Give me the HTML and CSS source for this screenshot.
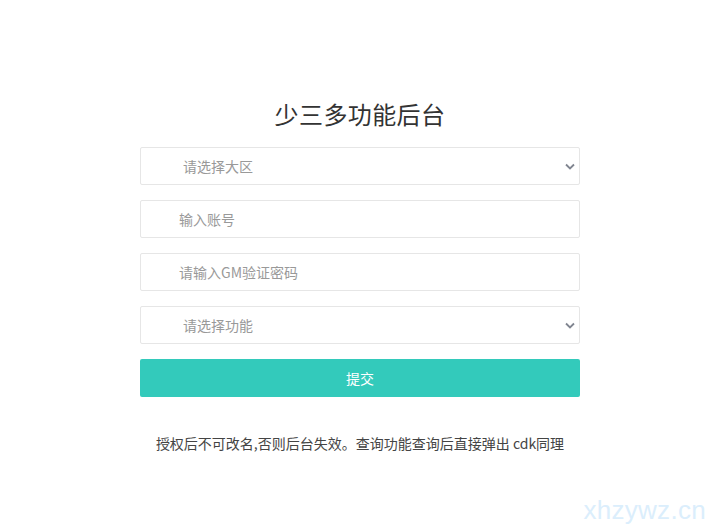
FILE: index.html
```html
<!DOCTYPE html>
<html lang="zh-CN">
<head>
<meta charset="utf-8">
<title>少三多功能后台</title>
<link rel="stylesheet" href="styles.css">
</head>
<body>
<main class="wrap">
  <h1 class="title">少三多功能后台</h1>
  <form class="form">
    <div class="select-box">
      <select class="field sel"><option>请选择大区</option></select>
      <svg class="chev" width="10" height="7" viewBox="0 0 10 7"><path d="M1 1.5 L5 5.5 L9 1.5" fill="none" stroke="#808590" stroke-width="1.8"/></svg>
    </div>
    <input class="field inp" type="text" placeholder="输入账号">
    <input class="field inp" type="text" placeholder="请输入GM验证密码">
    <div class="select-box">
      <select class="field sel"><option>请选择功能</option></select>
      <svg class="chev" width="10" height="7" viewBox="0 0 10 7"><path d="M1 1.5 L5 5.5 L9 1.5" fill="none" stroke="#808590" stroke-width="1.8"/></svg>
    </div>
    <button class="btn" type="button">提交</button>
  </form>
  <p class="note">授权后不可改名,否则后台失效。查询功能查询后直接弹出 cdk同理</p>
</main>
<div class="watermark">xhzywz.cn</div>
</body>
</html>
```

FILE: styles.css
```css
html, body {
  margin: 0;
  padding: 0;
  background: #fff;
}
body {
  font-family: "Noto Sans CJK SC", "Noto Sans", sans-serif;
  color: #333;
  width: 708px;
  height: 525px;
  overflow: hidden;
  position: relative;
}
.wrap {
  width: 440px;
  margin: 0 0 0 140px;
  padding-top: 97px;
}
.title {
  margin: 0 0 16px;
  font-size: 24px;
  line-height: 34px;
  font-weight: 400;
  text-align: center;
  color: #333;
  letter-spacing: 0.4px;
}
.form {
  display: flex;
  flex-direction: column;
  gap: 15px;
}
.field {
  box-sizing: border-box;
  width: 100%;
  height: 38px;
  border: 1px solid #e6e6e6;
  border-radius: 2px;
  background: #fff;
  font-family: inherit;
  font-size: 14px;
  color: #999;
  outline: none;
  margin: 0;
}
.inp {
  padding: 0 0 1px 38px;
}
.inp::placeholder {
  color: #999;
}
.select-box {
  position: relative;
}
.sel {
  appearance: none;
  -webkit-appearance: none;
  padding: 0 0 1px 42px;
}
.chev {
  position: absolute;
  right: 5px;
  top: 16px;
  pointer-events: none;
}
.btn {
  height: 38px;
  border: none;
  border-radius: 2px;
  background: #33cabb;
  color: #fff;
  font-family: inherit;
  font-size: 14px;
  padding: 0 0 1px;
}
.note {
  margin: 36px 0 0;
  text-align: center;
  font-size: 14px;
  line-height: 20px;
  color: #444;
}
.watermark {
  position: absolute;
  right: 2px;
  bottom: 0;
  font-family: "Liberation Sans", Arial, sans-serif;
  font-size: 26px;
  line-height: 30px;
  color: #dbeefc;
  letter-spacing: 0.3px;
}
```
